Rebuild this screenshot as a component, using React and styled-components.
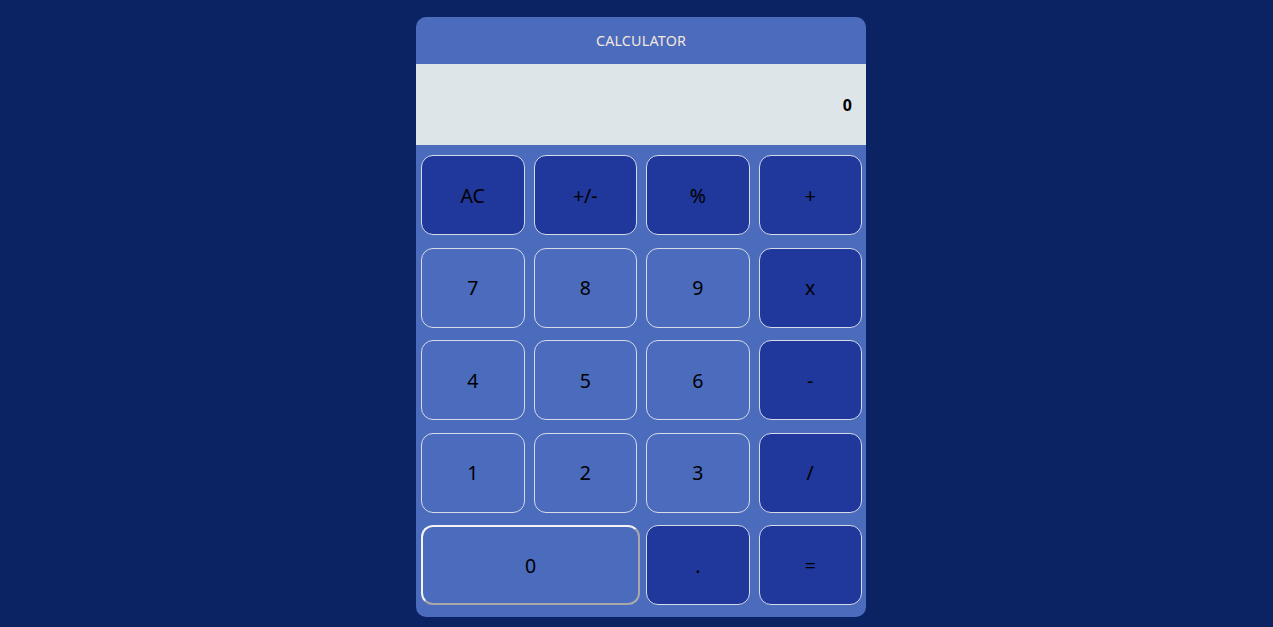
import React from "react";
import styled, { createGlobalStyle } from "styled-components";

const GlobalStyle = createGlobalStyle`
  html, body {
    margin: 0;
    padding: 0;
    background: #0c2363;
    font-family: "Noto Sans", "Open Sans", sans-serif;
  }
`;

const Page = styled.div`
  display: flex;
  justify-content: center;
  padding: 17px 0 0 9px;
  min-height: 627px;
  box-sizing: border-box;
`;

const Card = styled.div`
  width: 450px;
  height: 600px;
  background: #4b6bbd;
  border-radius: 10px;
  overflow: hidden;
  display: flex;
  flex-direction: column;
`;

const Title = styled.div`
  height: 47px;
  display: flex;
  align-items: center;
  justify-content: center;
  color: #f3e6dc;
  font-size: 14.3px;
  letter-spacing: 0.2px;
`;

const Display = styled.div`
  height: 81px;
  background: #dde5e8;
  display: flex;
  align-items: center;
  justify-content: flex-end;
  padding: 0 14px;
  font-size: 16px;
  font-weight: 700;
  color: #000;
`;

const Keypad = styled.div`
  display: grid;
  grid-template-columns: repeat(4, 103.5px);
  grid-auto-rows: 80px;
  column-gap: 9px;
  row-gap: 12.5px;
  padding: 10px 4px 0 5px;
`;

const Key = styled.button`
  box-sizing: border-box;
  border: 1px solid #d6dbe8;
  border-radius: 12px;
  background: ${p => (p.$dark ? "#20379b" : "#4b6bbd")};
  color: #000;
  font-family: inherit;
  font-size: 19.5px;
  padding: 0;
  cursor: pointer;
`;

const WideKey = styled(Key)`
  grid-column: span 2;
  width: 219px;
  border: 2px solid;
  border-color: #f4f4f4 #a8a8a8 #a8a8a8 #f4f4f4;
`;

const rows = [
  [["AC", true], ["+/-", true], ["%", true], ["+", true]],
  [["7"], ["8"], ["9"], ["x", true]],
  [["4"], ["5"], ["6"], ["-", true]],
  [["1"], ["2"], ["3"], ["/", true]],
];

export default function App() {
  return (
    <>
      <GlobalStyle />
      <Page>
        <Card>
          <Title>CALCULATOR</Title>
          <Display>0</Display>
          <Keypad>
            {rows.flat().map(([label, dark], i) => (
              <Key key={i} $dark={dark}>{label}</Key>
            ))}
            <WideKey>0</WideKey>
            <Key $dark>.</Key>
            <Key $dark>=</Key>
          </Keypad>
        </Card>
      </Page>
    </>
  );
}
